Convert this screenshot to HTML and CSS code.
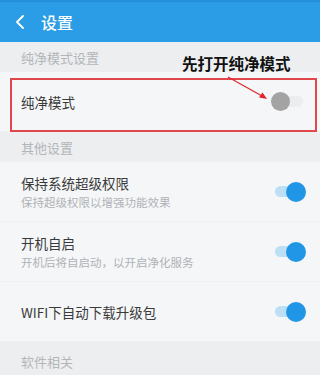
FILE: index.html
```html
<!DOCTYPE html>
<html lang="zh-CN">
<head>
    <meta charset="UTF-8">
    <meta name="viewport" content="width=device-width, initial-scale=1.0">
    <title>设置</title>
    <link rel="stylesheet" href="styles.css">
</head>
<body>
    <div class="page">
        <header class="topbar">
            <svg class="back" width="10" height="14" viewBox="0 0 10 14">
                <path d="M8 1 L2 7 L8 13" fill="none" stroke="#fff" stroke-width="1.8" stroke-linecap="round" stroke-linejoin="round"/>
            </svg>
            <h1>设置</h1>
        </header>

        <div class="section">纯净模式设置</div>
        <div class="row">
            <div class="row-text">
                <div class="row-title">纯净模式</div>
            </div>
            <div class="switch"><span class="knob"></span></div>
        </div>

        <div class="section">其他设置</div>
        <div class="row">
            <div class="row-text">
                <div class="row-title">保持系统超级权限</div>
                <div class="row-sub">保持超级权限以增强功能效果</div>
            </div>
            <div class="switch on"><span class="knob"></span></div>
        </div>
        <div class="row">
            <div class="row-text">
                <div class="row-title">开机自启</div>
                <div class="row-sub">开机后将自启动，以开启净化服务</div>
            </div>
            <div class="switch on"><span class="knob"></span></div>
        </div>
        <div class="row">
            <div class="row-text">
                <div class="row-title">WIFI下自动下载升级包</div>
            </div>
            <div class="switch on"><span class="knob"></span></div>
        </div>

        <div class="section last">软件相关</div>

        <!-- 标注 -->
        <div class="note">先打开纯净模式</div>
        <div class="highlight"></div>
        <svg class="arrow" width="320" height="375" viewBox="0 0 320 375">
            <line x1="228" y1="77" x2="262" y2="96" stroke="#e0262b" stroke-width="1.2"/>
            <path d="M267 99 L259 97.5 L262.5 92.5 Z" fill="#e0262b"/>
        </svg>
    </div>
</body>
</html>
```

FILE: styles.css
```css
* {
    margin: 0;
    padding: 0;
    box-sizing: border-box;
}

body {
    font-family: "Noto Sans CJK SC", "Noto Sans", sans-serif;
    background: #f3f5f7;
}

.page {
    position: relative;
    width: 320px;
    height: 375px;
    overflow: hidden;
    display: flex;
    flex-direction: column;
}

.topbar {
    height: 42px;
    background: #2b9ce6;
    border-top: 2px solid #2490da;
    display: flex;
    align-items: center;
    padding-left: 15px;
    gap: 16px;
    flex-shrink: 0;
}

.topbar h1 {
    color: #fff;
    font-size: 16px;
    font-weight: 500;
}

.section {
    height: 30px;
    background: #eceef0;
    color: #b3b6b9;
    font-size: 13px;
    padding-left: 21px;
    display: flex;
    align-items: center;
    flex-shrink: 0;
}

.section.last {
    height: 36px;
    padding-top: 3px;
}

.row {
    height: 60px;
    background: #f4f6f8;
    border-bottom: 1px solid #eef0f2;
    display: flex;
    align-items: center;
    justify-content: space-between;
    padding: 0 17px 0 21px;
    flex-shrink: 0;
}

.row-title {
    font-size: 13.5px;
    color: #3a3a3a;
    line-height: 20px;
}

.row-sub {
    font-size: 11.5px;
    color: #b0b3b6;
    line-height: 18px;
}

.switch {
    position: relative;
    width: 28px;
    height: 11px;
    border-radius: 6px;
    background: #ebedef;
}

.switch .knob {
    position: absolute;
    top: -4px;
    left: -4px;
    width: 19px;
    height: 19px;
    border-radius: 50%;
    background: #a3a3a3;
}

.switch.on {
    background: #bcdff6;
}

.switch.on .knob {
    left: auto;
    right: -3px;
    width: 20px;
    height: 20px;
    top: -4.5px;
    background: #2196e6;
}

.note {
    position: absolute;
    left: 182px;
    top: 52px;
    font-size: 15.5px;
    font-weight: 700;
    color: #111;
}

.highlight {
    position: absolute;
    left: 10px;
    top: 78px;
    width: 307px;
    height: 54px;
    border: 2px solid #e0474c;
}

.arrow {
    position: absolute;
    left: 0;
    top: 0;
}
```
